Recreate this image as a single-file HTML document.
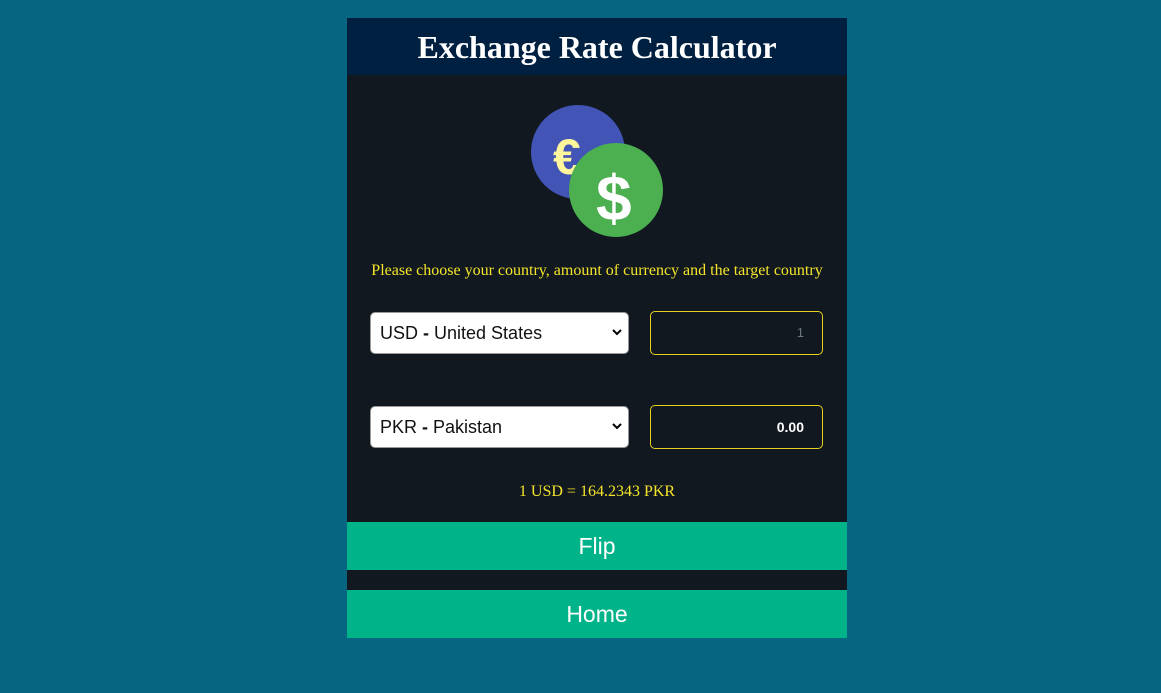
<!DOCTYPE html>
<html><head><style>
body{margin:0;background:#066682;width:1161px;height:693px;overflow:hidden;font-family:"Liberation Serif",serif}
.c{position:absolute;left:347px;top:18px;width:500px;height:620px;background:#111820}
.h{position:absolute;left:0;top:0;width:500px;height:57px;background:#002041;color:#fff;font-weight:bold;font-size:32px;text-align:center;line-height:58px}
.p{position:absolute;left:0;width:500px;text-align:center;color:#f5e52a;font-size:16px}
.s{position:absolute;left:23px;height:40px;background:#fff;border:1px solid #999;border-radius:5px;font-family:"Liberation Sans",sans-serif;font-size:18px;line-height:40px;padding-left:9px;width:248px;color:#111}
.s svg{position:absolute;right:6px;top:16px}
.i{position:absolute;left:303px;height:42px;border:1px solid #e8d21d;border-radius:5px;font-family:"Liberation Sans",sans-serif;text-align:right;line-height:42px;padding-right:18px;width:153px}
.b{position:absolute;left:0;width:500px;height:48px;background:#00b388;color:#fff;font-family:"Liberation Sans",sans-serif;font-size:23px;text-align:center;line-height:48px}
</style></head><body>
<div class="c">
<div class="h">Exchange Rate Calculator</div>
<svg style="position:absolute;left:180px;top:84px" width="140" height="140">
<circle cx="51" cy="50" r="47" fill="#4254b5"/>
<text x="26" y="72" font-family="Liberation Sans" font-weight="bold" font-size="50" fill="#fff59d">€</text>
<circle cx="89" cy="88" r="47" fill="#4caf50"/>
<text x="69" y="118" font-family="Liberation Sans" font-weight="bold" font-size="64" fill="#fff">$</text>
</svg>
<div class="p" style="top:244px">Please choose your country, amount of currency and the target country</div>
<div class="s" style="top:294px">USD <b>-</b> United States<svg width="10" height="8"><path d="M1 1l4 4 4-4" stroke="#000" stroke-width="2" fill="none"/></svg></div>
<div class="i" style="top:293px;color:#6b7780;font-size:13px">1</div>
<div class="s" style="top:388px">PKR <b>-</b> Pakistan<svg width="10" height="8"><path d="M1 1l4 4 4-4" stroke="#000" stroke-width="2" fill="none"/></svg></div>
<div class="i" style="top:387px;color:#fff;font-weight:bold;font-size:14px">0.00</div>
<div class="p" style="top:465px">1 USD = 164.2343 PKR</div>
<div class="b" style="top:504px">Flip</div>
<div class="b" style="top:572px">Home</div>
</div>
</body></html>
